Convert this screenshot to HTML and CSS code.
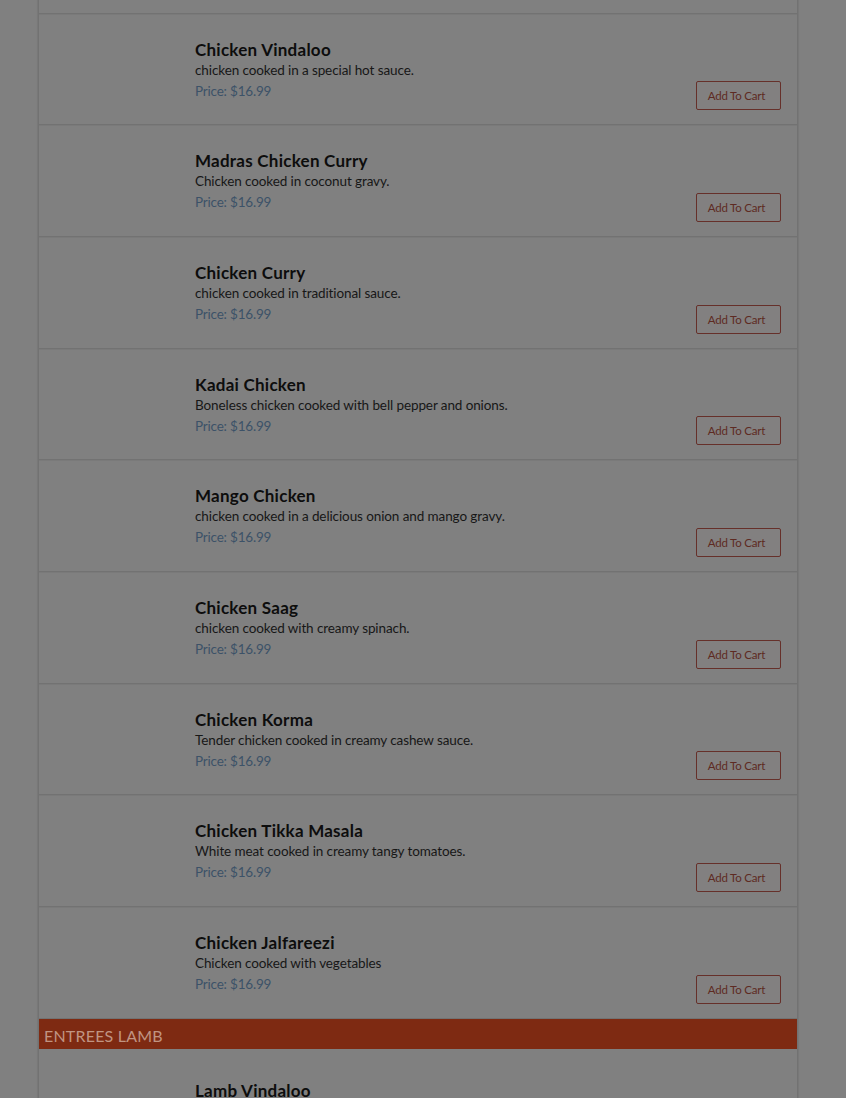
FILE: index.html
```html
<!DOCTYPE html>
<html>
<head>
<meta charset="utf-8">
<link rel="stylesheet" href="styles.css">
</head>
<body>
<div class="menu">
  <div class="item partial">
    <div class="thumb"></div>
    <div class="info"></div>
    <div class="action"><button class="cart">Add To Cart</button></div>
  </div>
  <div class="item">
    <div class="thumb"></div>
    <div class="info"><div class="name">Chicken Vindaloo</div><div class="desc">chicken cooked in a special hot sauce.</div><div class="price">Price: $16.99</div></div>
    <div class="action"><button class="cart">Add To Cart</button></div>
  </div>
  <div class="item">
    <div class="thumb"></div>
    <div class="info"><div class="name">Madras Chicken Curry</div><div class="desc">Chicken cooked in coconut gravy.</div><div class="price">Price: $16.99</div></div>
    <div class="action"><button class="cart">Add To Cart</button></div>
  </div>
  <div class="item">
    <div class="thumb"></div>
    <div class="info"><div class="name">Chicken Curry</div><div class="desc">chicken cooked in traditional sauce.</div><div class="price">Price: $16.99</div></div>
    <div class="action"><button class="cart">Add To Cart</button></div>
  </div>
  <div class="item">
    <div class="thumb"></div>
    <div class="info"><div class="name">Kadai Chicken</div><div class="desc">Boneless chicken cooked with bell pepper and onions.</div><div class="price">Price: $16.99</div></div>
    <div class="action"><button class="cart">Add To Cart</button></div>
  </div>
  <div class="item">
    <div class="thumb"></div>
    <div class="info"><div class="name">Mango Chicken</div><div class="desc">chicken cooked in a delicious onion and mango gravy.</div><div class="price">Price: $16.99</div></div>
    <div class="action"><button class="cart">Add To Cart</button></div>
  </div>
  <div class="item">
    <div class="thumb"></div>
    <div class="info"><div class="name">Chicken Saag</div><div class="desc">chicken cooked with creamy spinach.</div><div class="price">Price: $16.99</div></div>
    <div class="action"><button class="cart">Add To Cart</button></div>
  </div>
  <div class="item">
    <div class="thumb"></div>
    <div class="info"><div class="name">Chicken Korma</div><div class="desc">Tender chicken cooked in creamy cashew sauce.</div><div class="price">Price: $16.99</div></div>
    <div class="action"><button class="cart">Add To Cart</button></div>
  </div>
  <div class="item">
    <div class="thumb"></div>
    <div class="info"><div class="name">Chicken Tikka Masala</div><div class="desc">White meat cooked in creamy tangy tomatoes.</div><div class="price">Price: $16.99</div></div>
    <div class="action"><button class="cart">Add To Cart</button></div>
  </div>
  <div class="item">
    <div class="thumb"></div>
    <div class="info"><div class="name">Chicken Jalfareezi</div><div class="desc">Chicken cooked with vegetables</div><div class="price">Price: $16.99</div></div>
    <div class="action"><button class="cart">Add To Cart</button></div>
  </div>
  <div class="category">ENTREES LAMB</div>
  <div class="item first-in-cat">
    <div class="thumb"></div>
    <div class="info"><div class="name">Lamb Vindaloo</div><div class="desc">lamb cooked in a special hot sauce.</div><div class="price">Price: $17.99</div></div>
    <div class="action"><button class="cart">Add To Cart</button></div>
  </div>
</div>
</body>
</html>
```
FILE: styles.css
```css
html, body {
  margin: 0;
  padding: 0;
  background: #808080;
  overflow: hidden;
}
body {
  font-family: "Lato", "Liberation Sans", sans-serif;
  color: #111;
}
.menu {
  width: 758px;
  margin-left: 39px;
  margin-top: -98px;
  background: #808080;
  box-shadow: -1px 0 0 #727272, 1px 0 0 #727272, -2px 0 1px rgba(0,0,0,0.06), 2px 0 1px rgba(0,0,0,0.06);
}
.item {
  display: flex;
  height: 110.67px;
  border-bottom: 1px solid #727272;
  box-shadow: 0 1px 0 #7a7a7a;
}
.thumb {
  width: 156px;
  flex: none;
}
.info {
  flex: 1;
  padding-top: 26px;
}
.name {
  font-size: 17px;
  font-weight: 700;
  color: #0d0d0d;
  line-height: 20px;
  letter-spacing: 0.25px;
}
.desc {
  font-size: 13.5px;
  color: #171717;
  line-height: 20px;
  letter-spacing: -0.1px;
}
.price {
  font-size: 13.5px;
  color: #3c5268;
  line-height: 22px;
  letter-spacing: -0.2px;
}
.action {
  display: flex;
  align-items: flex-end;
  padding: 0 16px 14px 0;
}
.cart {
  width: 85px;
  height: 29px;
  border: 1px solid #66302a;
  border-radius: 2px;
  background: #828080;
  color: #5e2a22;
  font-family: "Lato", "Liberation Sans", sans-serif;
  font-size: 11.5px;
  letter-spacing: -0.2px;
  padding: 0 4px 0 0;
  text-align: center;
}
.category {
  height: 30px;
  background: #7e2a12;
  color: #c09482;
  font-size: 16px;
  line-height: 34px;
  padding-left: 5px;
  letter-spacing: 0.2px;
}
.first-in-cat .info {
  padding-top: 32px;
}
```
